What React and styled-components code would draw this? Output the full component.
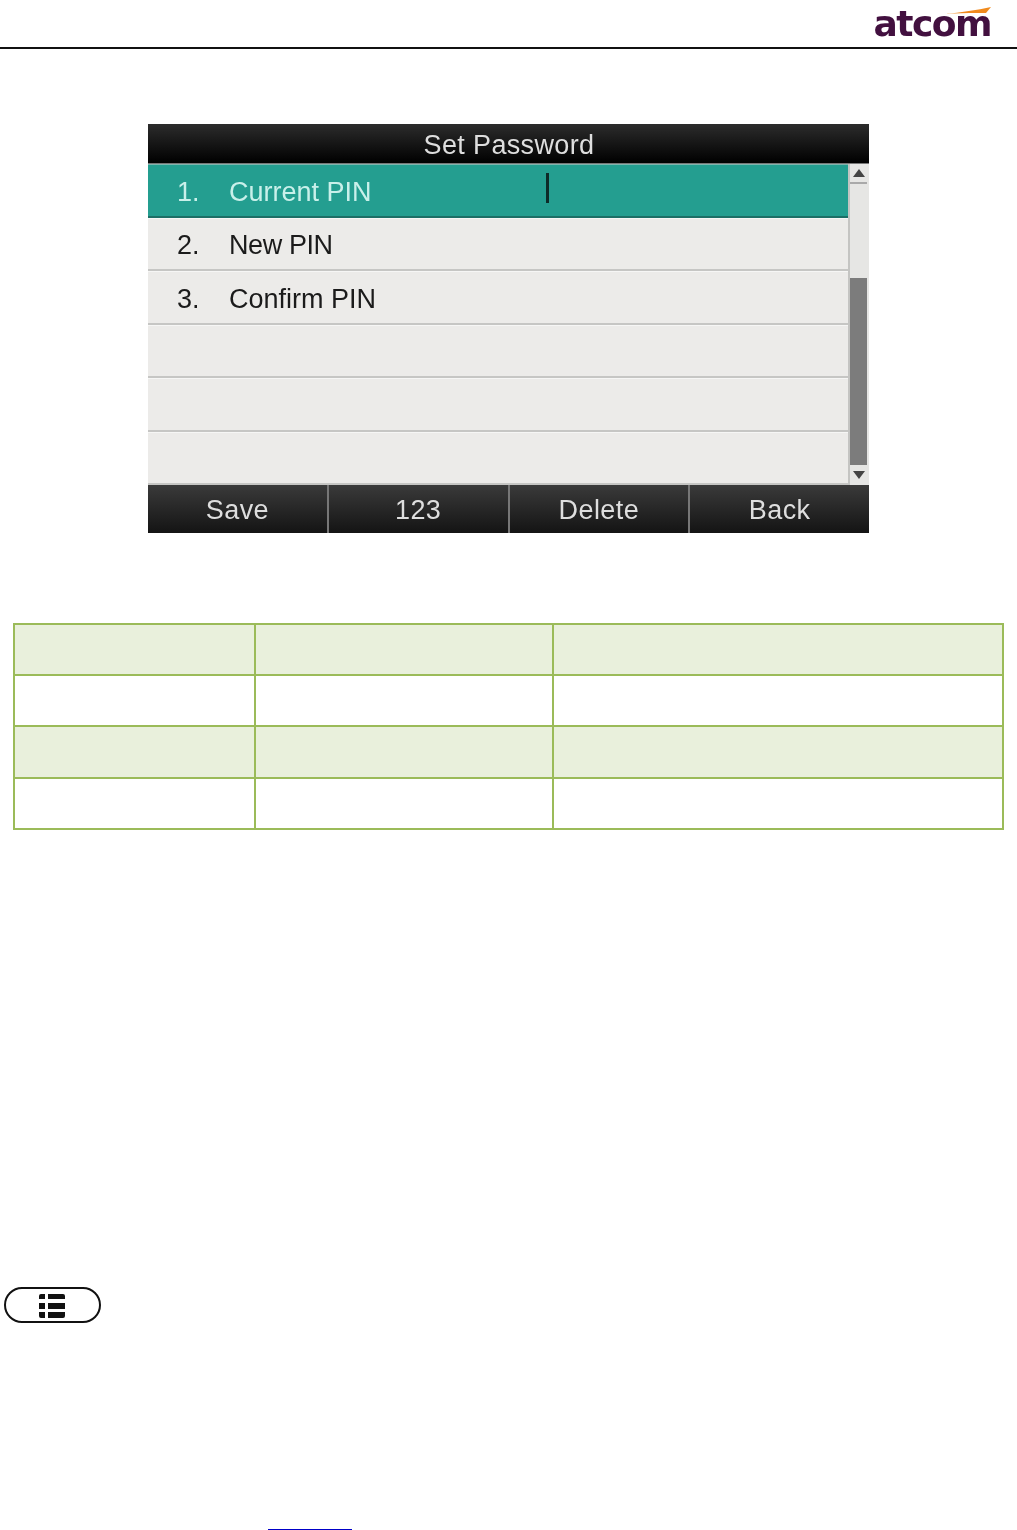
import React from "react";
import styled, { createGlobalStyle } from "styled-components";

const rows = [
  { num: "1.", label: "Current PIN", active: true },
  { num: "2.", label: "New PIN", tight: true },
  { num: "3.", label: "Confirm PIN" },
  {},
  {},
  {},
];
const softKeys = ["Save", "123", "Delete", "Back"];

export default function App() {
  return (
    <Page>
      <GlobalStyle />
      <Header>
        <Logo>
          <Swoosh width="46" height="7" viewBox="0 0 46 7">
            <path d="M0 7 C 16 5.5, 32 3, 46 0 L 41 6 C 28 5.8, 14 6, 0 7 Z" fill="#f08a1d" />
          </Swoosh>
          <LogoText>atcom</LogoText>
        </Logo>
      </Header>

      <Screen>
        <Title>Set Password</Title>
        <Body>
          <List>
            {rows.map((row, i) => (
              <Row key={i} $active={row.active}>
                <Num>{row.num}</Num>
                <Label $tight={row.tight}>{row.label}</Label>
                {row.active && <Caret />}
              </Row>
            ))}
          </List>
          <ScrollBar>
            <ScrollButton $up $h={20}>
              <svg width="12" height="8" viewBox="0 0 12 8">
                <path d="M6 0 L12 8 L0 8 Z" fill="#444" />
              </svg>
            </ScrollButton>
            <Track />
            <Thumb />
            <ScrollButton $h={20}>
              <svg width="12" height="8" viewBox="0 0 12 8">
                <path d="M0 0 L12 0 L6 8 Z" fill="#444" />
              </svg>
            </ScrollButton>
          </ScrollBar>
        </Body>
        <SoftKeys>
          {softKeys.map((k) => (
            <SoftKey key={k}>{k}</SoftKey>
          ))}
        </SoftKeys>
      </Screen>

      <Table>
        {[51, 51, 52, 51].map((h, r) => (
          <TableRow key={r} $h={h} $shaded={r % 2 === 0}>
            <Cell />
            <Cell />
            <Cell />
          </TableRow>
        ))}
      </Table>

      <MenuKey>
        <MenuIcon width="26" height="24" viewBox="0 0 26 24">
          <path d="M0 2 Q0 0 2 0 H6 V5 H0 Z M0 9 H6 V15 H0 Z M0 18 H6 V24 H2 Q0 24 0 22 Z" fill="#111" />
          <path d="M9 0 H24 Q26 0 26 2 V5 H9 Z M9 9 H26 V15 H9 Z M9 18 H26 V22 Q26 24 24 24 H9 Z" fill="#111" />
        </MenuIcon>
      </MenuKey>

      <LinkLine />
    </Page>
  );
}

const GlobalStyle = createGlobalStyle`
  html, body {
    margin: 0;
    padding: 0;
    background: #fff;
    font-family: "Liberation Sans", Arial, sans-serif;
  }
`;

const Page = styled.div`
  width: 1017px;
  height: 1530px;
  overflow: hidden;
`;

const Header = styled.header`
  height: 47px;
  border-bottom: 2px solid #111;
  display: flex;
  justify-content: flex-end;
  align-items: flex-end;
  padding-right: 26px;
`;

const Logo = styled.div`
  position: relative;
  width: 120px;
  height: 47px;
  display: flex;
  justify-content: flex-end;
  align-items: flex-end;
`;

const LogoText = styled.span`
  font-family: "DejaVu Sans", sans-serif;
  font-weight: 700;
  font-size: 36px;
  line-height: 36px;
  letter-spacing: -1.5px;
  color: #42103f;
  margin-bottom: 5px;
  filter: blur(0.3px);
`;

const Swoosh = styled.svg`
  position: absolute;
  right: 0;
  top: 7px;
`;

const Screen = styled.section`
  width: 721px;
  margin: 75px auto 0;
  height: 409px;
  display: flex;
  flex-direction: column;
  background: #ecebe9;
  filter: blur(0.35px);
`;

const Title = styled.div`
  height: 40px;
  flex: none;
  box-sizing: border-box;
  padding-left: 1px;
  background: linear-gradient(#2c2c2c, #000);
  color: #dedede;
  font-size: 27px;
  letter-spacing: 0.35px;
  line-height: 42px;
  text-align: center;
  border-bottom: 1px solid #777;
`;

const Body = styled.div`
  flex: 1;
  display: flex;
  min-height: 0;
`;

const List = styled.div`
  flex: 1;
  display: flex;
  flex-direction: column;
`;

const Row = styled.div`
  flex: 1;
  box-sizing: border-box;
  position: relative;
  display: flex;
  align-items: center;
  padding-top: 4px;
  font-size: 27px;
  color: ${(p) => (p.$active ? "#c9f0ea" : "#1b1b1b")};
  background: ${(p) => (p.$active ? "#249e90" : "#ecebe9")};
  border-top: 1px solid ${(p) => (p.$active ? "#7fb5ae" : "#f6f6f5")};
  border-bottom: 2px solid ${(p) => (p.$active ? "#1c6f66" : "#c6c6c4")};
`;

const Num = styled.span`
  width: 81px;
  padding-left: 29px;
  box-sizing: border-box;
  flex: none;
`;

const Label = styled.span`
  white-space: nowrap;
  letter-spacing: ${(p) => (p.$tight ? "-0.4px" : "0")};
`;

const Caret = styled.i`
  position: absolute;
  left: 398px;
  top: 8px;
  width: 3px;
  height: 30px;
  background: #0d2b28;
`;

const ScrollBar = styled.div`
  flex: none;
  width: 21px;
  box-sizing: border-box;
  padding-right: 2px;
  border-left: 2px solid #c4c4c2;
  display: flex;
  flex-direction: column;
  background: #e6e6e4;
`;

const ScrollButton = styled.div`
  flex: none;
  height: ${(p) => p.$h}px;
  display: flex;
  align-items: center;
  justify-content: center;
  border-bottom: ${(p) => (p.$up ? "2px solid #a9a9a9" : "none")};
  box-sizing: border-box;
`;

const Track = styled.div`
  flex: none;
  height: 94px;
`;

const Thumb = styled.div`
  flex: 1;
  background: #7c7c7c;
`;

const SoftKeys = styled.div`
  height: 48px;
  flex: none;
  display: flex;
  background: linear-gradient(#3a3a3a, #141414);
  box-sizing: border-box;
`;

const SoftKey = styled.div`
  flex: 1;
  text-align: center;
  color: #dedede;
  font-size: 27px;
  letter-spacing: 0.45px;
  line-height: 50px;
  border-right: 2px solid #777;
  &:last-child {
    border-right: none;
  }
`;

const Table = styled.div`
  width: 991px;
  box-sizing: border-box;
  margin: 90px 0 0 13px;
  border-top: 2px solid #9bbb59;
  border-left: 2px solid #9bbb59;
`;

const TableRow = styled.div`
  display: grid;
  grid-template-columns: 241px 298px 450px;
  height: ${(p) => p.$h}px;
  background: ${(p) => (p.$shaded ? "#e9f0dc" : "#fff")};
`;

const Cell = styled.div`
  border-right: 2px solid #9bbb59;
  border-bottom: 2px solid #9bbb59;
`;

const MenuKey = styled.div`
  width: 97px;
  height: 36px;
  margin: 457px 0 0 4px;
  box-sizing: border-box;
  border: 2px solid #111;
  border-radius: 18px;
  display: flex;
  align-items: center;
  justify-content: center;
`;

const MenuIcon = styled.svg`
  margin: 1px 1px 0 0;
`;

const LinkLine = styled.div`
  width: 84px;
  height: 1px;
  margin: 206px 0 0 268px;
  background: #0000c8;
`;
